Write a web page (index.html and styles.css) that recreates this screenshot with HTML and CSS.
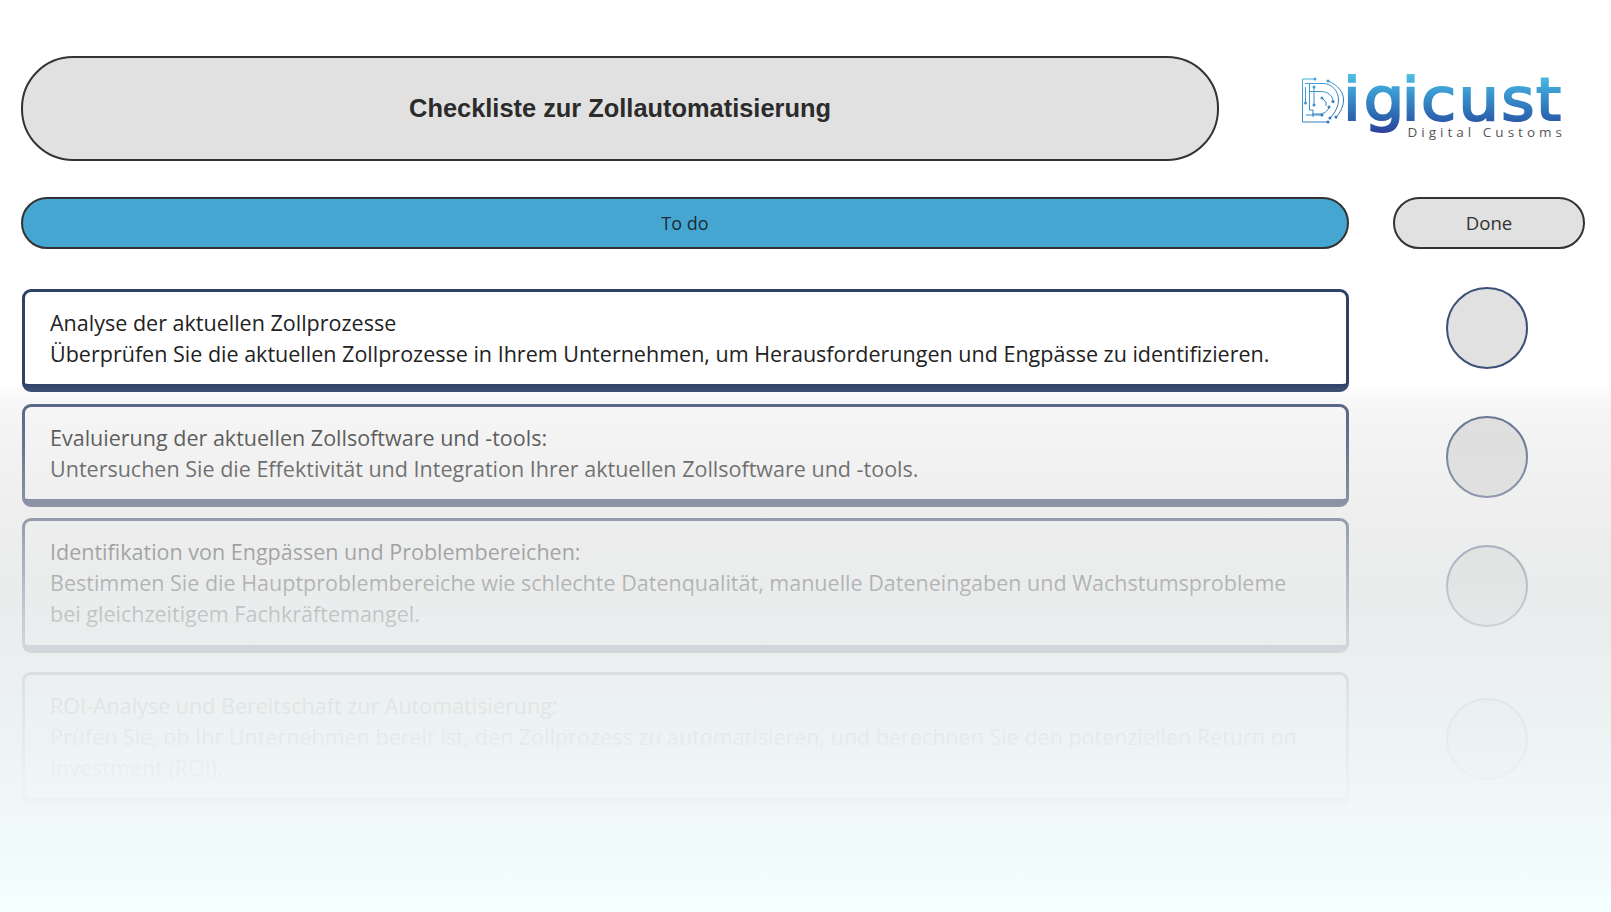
FILE: index.html
```html
<!DOCTYPE html>
<html lang="de">
<head>
<meta charset="utf-8">
<title>Checkliste zur Zollautomatisierung</title>
<link rel="stylesheet" href="styles.css">
</head>
<body>
<main class="page">
  <header class="top">
    <h1 class="title">Checkliste zur Zollautomatisierung</h1>
    <svg class="logo" viewBox="0 -10 270 85" width="270" height="85" role="img" aria-label="Digicust Digital Customs">
      <defs>
        <linearGradient id="word" gradientUnits="userSpaceOnUse" x1="0" y1="5" x2="0" y2="66">
          <stop offset="0" stop-color="#4fbfe2"/>
          <stop offset="0.3" stop-color="#3a97d0"/>
          <stop offset="0.72" stop-color="#2b62ad"/>
          <stop offset="1" stop-color="#30379a"/>
        </linearGradient>
        <linearGradient id="wire" gradientUnits="userSpaceOnUse" x1="2" y1="8" x2="44" y2="54">
          <stop offset="0" stop-color="#45b0de"/>
          <stop offset="1" stop-color="#2a62ad"/>
        </linearGradient>
      </defs>
      <g class="wires" fill="none" stroke="url(#wire)">
        <path d="M15 9H2.5V52H28"/>
        <path d="M28 11C38 15 43.5 22 43.5 30C43.5 37 40 43 36 47"/>
        <path d="M5 13.5H23C32 13.5 38.5 21 38.5 30C38.5 36 35 43 30 48"/>
        <path d="M10 21.5H21C28 21.5 33 26 33 31.5"/>
        <path d="M5.5 17V33M9.5 14V40H13V47"/>
        <path d="M14 17V35"/>
        <path d="M12 44H19C24 44 28 41 29 37"/>
        <path d="M6 45H22"/>
        <path d="M22 28L26 32V36"/>
      </g>
      <g class="dots" fill="url(#wire)">
        <circle cx="15" cy="9" r="1.5"/><circle cx="28" cy="11" r="1.5"/><circle cx="36" cy="47" r="1.5"/>
        <circle cx="30" cy="48" r="1.5"/><circle cx="28" cy="52" r="1.5"/><circle cx="33" cy="31.5" r="1.5"/>
        <circle cx="14" cy="35" r="1.5"/><circle cx="5.5" cy="33" r="1.5"/><circle cx="22" cy="28" r="1.5"/>
        <circle cx="22" cy="45" r="1.5"/><circle cx="29" cy="37" r="1.5"/><circle cx="14" cy="17" r="1.5"/>
      </g>
      <text class="word" transform="scale(1.1 1)" x="39 58 92.5 110 144 183 214.5" y="50" fill="url(#word)" stroke="url(#word)">igicust</text>
      <text class="tag" x="107.5" y="67" textLength="154.5" fill="#555">Digital Customs</text>
    </svg>
  </header>

  <div class="heads">
    <div class="pill pill-todo">To do</div>
    <div class="pill pill-done">Done</div>
  </div>

  <section class="rows">
    <div class="row row-one">
      <div class="card">Analyse der aktuellen Zollprozesse<br>Überprüfen Sie die aktuellen Zollprozesse in Ihrem Unternehmen, um Herausforderungen und Engpässe zu identifizieren.</div>
      <span class="check"></span>
    </div>
    <div class="row row-two">
      <div class="card">Evaluierung der aktuellen Zollsoftware und -tools:<br>Untersuchen Sie die Effektivität und Integration Ihrer aktuellen Zollsoftware und -tools.</div>
      <span class="check"></span>
    </div>
    <div class="row row-three">
      <div class="card">Identifikation von Engpässen und Problembereichen:<br>Bestimmen Sie die Hauptproblembereiche wie schlechte Datenqualität, manuelle Dateneingaben und Wachstumsprobleme bei gleichzeitigem Fachkräftemangel.</div>
      <span class="check"></span>
    </div>
    <div class="row">
      <div class="card">ROI-Analyse und Bereitschaft zur Automatisierung:<br>Prüfen Sie, ob Ihr Unternehmen bereit ist, den Zollprozess zu automatisieren, und berechnen Sie den potenziellen Return on Investment (ROI).</div>
      <span class="check"></span>
    </div>
  </section>
</main>
<div class="fade"></div>
</body>
</html>
```

FILE: styles.css
```css
* { box-sizing: border-box; }

html, body {
  margin: 0;
  height: 912px;
  overflow: hidden;
  background: #fff;
}

body {
  position: relative;
  font-family: "Open Sans", sans-serif;
  color: #222;
}

.page {
  padding: 56px 26px 0 21px;
}

.top {
  display: flex;
  align-items: flex-start;
}

.title {
  width: 1198px;
  height: 105px;
  margin: 0;
  display: flex;
  align-items: center;
  justify-content: center;
  background: #e1e1e1;
  border: 2px solid #333;
  border-radius: 52px;
  font-family: "Liberation Sans", Arial, sans-serif;
  font-size: 25.4px;
  font-weight: 700;
  color: #2b2b2b;
}

.logo {
  display: block;
  margin: 4px 0 0 81px;
  flex: none;
}

.wires { stroke-width: 1; }

.word {
  font-family: "DejaVu Sans", sans-serif;
  font-size: 58px;
  font-weight: 400;
  stroke-width: 2px;
}

.tag {
  font-family: "Open Sans", sans-serif;
  font-size: 13.5px;
}

.heads {
  display: flex;
  margin-top: 36px;
  gap: 44px;
}

.pill {
  height: 52px;
  padding-bottom: 1px;
  display: flex;
  align-items: center;
  justify-content: center;
  border: 2px solid #333;
  border-radius: 26px;
  font-size: 18px;
}

.pill-todo {
  width: 1328px;
  background: #45a7d1;
  color: #1f2a33;
}

.pill-done {
  width: 192px;
  background: #e1e1e1;
  color: #333;
  font-size: 18.6px;
}

.rows {
  margin-top: 40px;
  padding-left: 1px;
}

.row {
  display: flex;
  align-items: center;
}

.row-one { margin-bottom: 12px; }
.row-two { margin-bottom: 11px; }
.row-three { margin-bottom: 19px; }

.card {
  width: 1327px;
  flex: none;
  padding: 15px 24px 15px 25px;
  background: #fff;
  border: 3px solid #2e4167;
  border-bottom-width: 8px;
  border-radius: 9px;
  font-size: 21.53px;
  line-height: 31px;
}

.row-three .card {
  padding-bottom: 16px;
}

.check {
  flex: none;
  width: 82px;
  height: 82px;
  margin-left: 97px;
  background: #e1e1e1;
  border: 2px solid #3d5078;
  border-radius: 50%;
}

.row-one .check {
  align-self: flex-start;
  margin-top: -2px;
}

.row-two .check {
  margin-top: 3px;
}

.fade {
  position: absolute;
  inset: 0;
  pointer-events: none;
  background: linear-gradient(to bottom,
    rgba(220, 220, 220, 0) 383px,
    rgba(220, 220, 220, .25) 404px,
    rgba(218, 218, 218, .32) 440px,
    rgba(224, 224, 224, .52) 503px,
    rgba(226, 227, 227, .66) 550px,
    rgba(229, 233, 233, .82) 615px,
    rgba(232, 236, 236, .88) 650px,
    rgba(235, 240, 240, .945) 705px,
    rgba(239, 247, 248, .985) 800px,
    rgba(241, 250, 251, 1) 850px,
    rgba(244, 255, 255, 1) 912px);
}
```
